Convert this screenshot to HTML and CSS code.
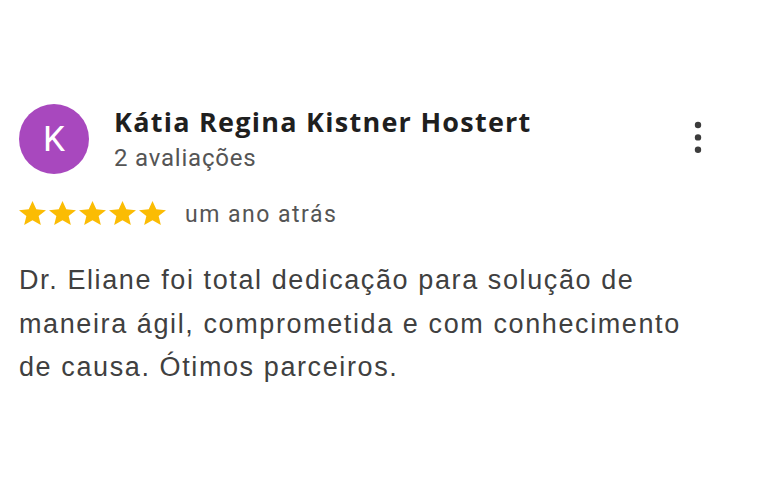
FILE: index.html
```html
<!DOCTYPE html>
<html lang="pt-BR">
<head>
    <meta charset="UTF-8">
    <meta name="viewport" content="width=device-width, initial-scale=1.0">
    <title>Avaliação</title>
    <link rel="stylesheet" href="styles.css">
</head>
<body>

    <div class="review">
        <div class="review-header">
            <div class="avatar">K</div>
            <div class="author">
                <div class="author-name">Kátia Regina Kistner Hostert</div>
                <div class="author-meta">2 avaliações</div>
            </div>
            <button class="menu-btn" aria-label="Mais opções">
                <svg width="10" height="38" viewBox="0 0 10 38">
                    <circle cx="5" cy="6" r="3.2"/>
                    <circle cx="5" cy="18.4" r="3.2"/>
                    <circle cx="5" cy="30.8" r="3.2"/>
                </svg>
            </button>
        </div>

        <div class="rating">
            <div class="stars">
                <svg class="star" viewBox="2 2 20 19" preserveAspectRatio="none"><path d="M12 17.27L18.18 21l-1.64-7.03L22 9.24l-7.19-.61L12 2 9.19 8.63 2 9.24l5.46 4.730L5.82 21z"/></svg>
                <svg class="star" viewBox="2 2 20 19" preserveAspectRatio="none"><path d="M12 17.27L18.18 21l-1.64-7.03L22 9.24l-7.19-.61L12 2 9.19 8.63 2 9.24l5.46 4.73L5.82 21z"/></svg>
                <svg class="star" viewBox="2 2 20 19" preserveAspectRatio="none"><path d="M12 17.27L18.18 21l-1.64-7.03L22 9.24l-7.19-.61L12 2 9.19 8.63 2 9.24l5.46 4.73L5.82 21z"/></svg>
                <svg class="star" viewBox="2 2 20 19" preserveAspectRatio="none"><path d="M12 17.27L18.18 21l-1.64-7.03L22 9.24l-7.19-.61L12 2 9.19 8.63 2 9.24l5.46 4.73L5.82 21z"/></svg>
                <svg class="star" viewBox="2 2 20 19" preserveAspectRatio="none"><path d="M12 17.27L18.18 21l-1.64-7.03L22 9.24l-7.19-.61L12 2 9.19 8.63 2 9.24l5.46 4.73L5.82 21z"/></svg>
            </div>
            <span class="date">um ano atrás</span>
        </div>

        <p class="review-text">Dr. Eliane foi total dedicação para solução de maneira ágil, comprometida e com conhecimento de causa. Ótimos parceiros.</p>
    </div>

</body>
</html>
```

FILE: styles.css
```css
body {
    margin: 0;
    padding: 0;
    background-color: #ffffff;
    font-family: Roboto, 'Liberation Sans', Arial, sans-serif;
}
.review {
    padding: 104px 20px 0 19px;
}
.review-header {
    display: flex;
    align-items: flex-start;
}
.avatar {
    width: 70px;
    height: 70px;
    border-radius: 50%;
    background-color: #a848be;
    color: #ffffff;
    font-size: 35px;
    line-height: 1;
    display: flex;
    align-items: center;
    justify-content: center;
    flex-shrink: 0;
}
.author {
    margin-left: 25px;
    flex: 1;
    padding-top: 1px;
}
.author-name {
    font-family: 'Open Sans', Roboto, sans-serif;
    font-size: 27px;
    font-weight: 700;
    letter-spacing: 1.25px;
    color: #1f1f1f;
    line-height: 34px;
}
.author-meta {
    margin-top: 4px;
    font-size: 24px;
    letter-spacing: 0.8px;
    color: #555555;
    line-height: 30px;
}
.menu-btn {
    background: none;
    border: none;
    padding: 0;
    margin: 15px 45px 0 0;
    cursor: pointer;
}
.menu-btn svg {
    display: block;
    fill: #3c3c3c;
}
.rating {
    display: flex;
    align-items: flex-start;
    margin-top: 27px;
}
.stars {
    display: flex;
    gap: 3px;
}
.star {
    width: 27px;
    height: 24px;
    fill: #fbbc04;
}
.date {
    margin-left: 19px;
    font-size: 23px;
    letter-spacing: 1.5px;
    line-height: 28px;
    color: #555555;
}
.review-text {
    margin: 30px 0 0;
    max-width: 695px;
    font-family: 'Liberation Sans', Arial, sans-serif;
    font-size: 27px;
    letter-spacing: 1.6px;
    line-height: 43.5px;
    color: #404040;
}
```
